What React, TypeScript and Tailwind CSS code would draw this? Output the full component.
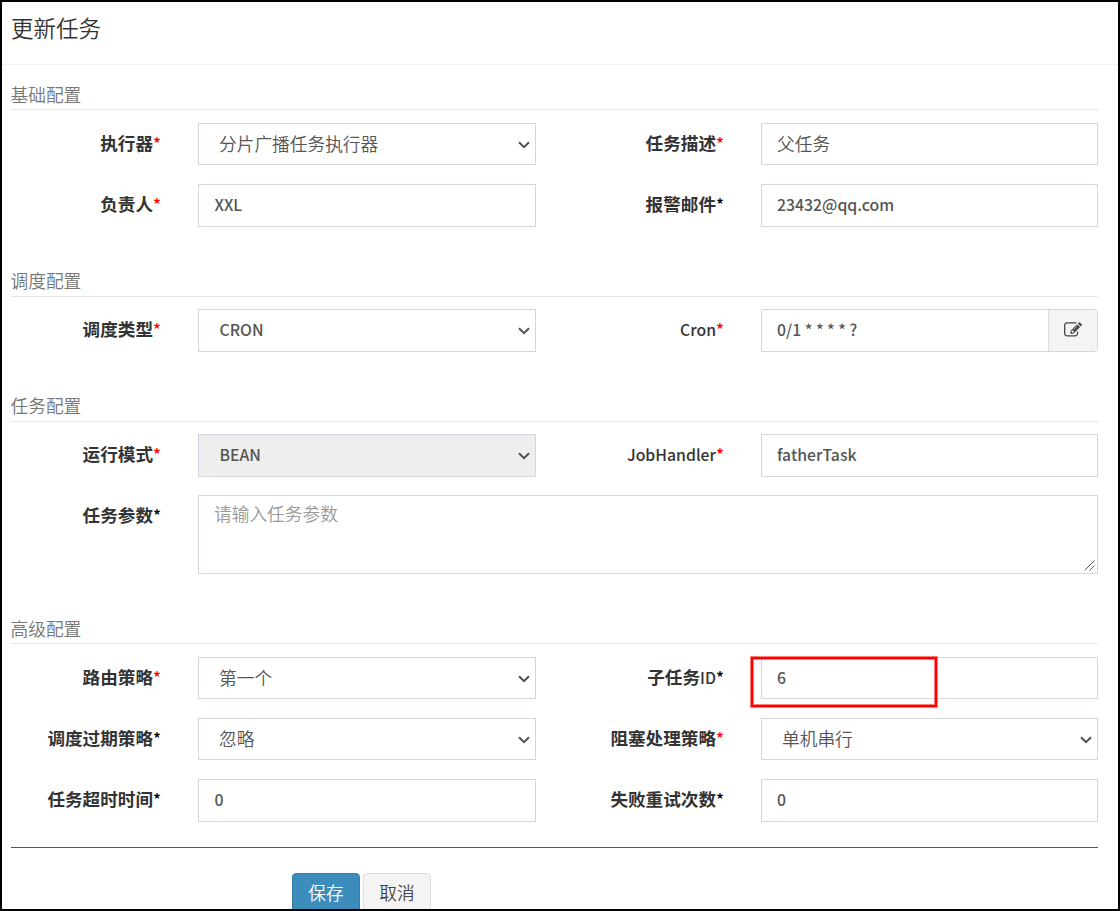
import React from "react";

function Section({ title, className, raised, children }: { title: string; className: string; raised?: boolean; children: React.ReactNode }) {
  return (
    <section className={className}>
      <h2 className={`mr-[20px] ml-[9px] h-[30px] border-b border-[#e5e5e5] text-[17.7px] font-[350] text-[#777] ${raised ? "leading-[26px]" : "leading-[28px]"}`}>
        <span className="-ml-[0.5px]">{title}</span>
      </h2>
      {children}
    </section>
  );
}

function Label({ text, latin = "", red = true, right }: { text?: string; latin?: string; red?: boolean; right?: boolean }) {
  return (
    <label className={`mr-[37px] h-[42px] shrink-0 text-right text-[17.600px] leading-[40px] font-bold whitespace-nowrap text-[#333] ${right ? "w-[188px]" : "w-[159px]"}`}>
      {text}
      {latin && <span className="text-[15.800px] font-medium">{latin}</span>}
      <span className={red ? "text-[16.5px] font-medium text-[#f00]" : "text-[16.5px] font-medium text-black"}>*</span>
    </label>
  );
}

interface BoxProps {
  value: string;
  select?: boolean;
  disabled?: boolean;
  chinese?: boolean;
  addon?: boolean;
  right?: boolean;
  short?: boolean;
}

function Box({ value, select, disabled, chinese, addon, right, short }: BoxProps) {
  return (
    <div
      className={`flex shrink-0 items-center border border-[#d2d6de] text-[#555] ${short ? "h-[42px]" : "h-[43px]"} ${right ? "w-[337px]" : "w-[338px]"} ${disabled ? "bg-[#eee]" : "bg-white"} ${select ? (chinese ? "pl-[20px]" : "pl-[20.500px]") : right ? "pl-[15px]" : "pl-[15.500px]"} ${addon ? "rounded-r-[4px]" : ""}`}
    >
      <span className={chinese ? "pb-[2px] text-[17.7px] leading-[38px] font-[350]" : short ? "text-[15.800px] leading-[40px] font-medium" : "pb-[2px] text-[15.800px] leading-[38px] font-medium"}>{value}</span>
      {select && (
        <svg className={`mr-[5px] ml-auto ${short ? "mt-[2px]" : "mt-px"}`} width="12" height="8" viewBox="0 0 12 8" fill="none" stroke="#505050" strokeWidth="2">
          <path d="M1 1.200l5 5 5-5" />
        </svg>
      )}
      {addon && (
        <button className="ml-auto flex h-[41px] w-[49px] items-center justify-center rounded-r-[3px] border-l border-[#ddd] bg-[#f4f4f4]">
          <svg className="-mt-px" width="18" height="18" viewBox="0 0 1792 1792" fill="#444">
            <path d="M888 1184l116-116-152-152-116 116v56h96v96h56zm440-720q-16-16-33 1l-350 350q-17 17-1 33t33-1l350-350q17-17 1-33zm80 594v190q0 119-84.500 203.500t-203.500 84.500h-832q-119 0-203.500-84.500t-84.500-203.500v-832q0-119 84.500-203.500t203.500-84.500h832q63 0 117 25 15 7 18 23 3 17-9 29l-49 49q-14 14-32 8-23-6-45-6h-832q-66 0-113 47t-47 113v832q0 66 47 113t113 47h832q66 0 113-47t47-113v-126q0-13 9-22l64-64q15-15 35-7t20 29zm-96-738l288 288-672 672h-288v-288zm444 132l-92 92-288-288 92-92q28-28 68-28t68 28l152 152q28 28 28 68t-28 68z" />
          </svg>
        </button>
      )}
    </div>
  );
}

function Row({ className, children }: { className: string; children: React.ReactNode }) {
  return <div className={`relative flex ${className}`}>{children}</div>;
}

export default function App() {
  return (
    <div className="h-[911px] w-[1120px] overflow-hidden border-2 border-black bg-white font-['Noto_Sans_CJK_SC',sans-serif]">
      <h1 className="h-[63px] border-b border-[#f4f4f4] pl-[9px] text-[22.5px] leading-[51px] font-[350] text-[#333]">更新任务</h1>

      <Section title="基础配置" className="mt-[15px]">
        <Row className="mt-[13px]">
          <Label text="执行器" />
          <Box value="分片广播任务执行器" select chinese short />
          <Label text="任务描述" right />
          <Box value="父任务" chinese right short />
        </Row>
        <Row className="mt-[19px]">
          <Label text="负责人" />
          <Box value="XXL" />
          <Label text="报警邮件" red={false} right />
          <Box value="23432@qq.com" right />
        </Row>
      </Section>

      <Section title="调度配置" className="mt-[40px]" raised>
        <Row className="mt-[12px]">
          <Label text="调度类型" />
          <Box value="CRON" select />
          <Label latin="Cron" right />
          <Box value="0/1 * * * * ?" addon right />
        </Row>
      </Section>

      <Section title="任务配置" className="mt-[40px]" raised>
        <Row className="mt-[12px]">
          <Label text="运行模式" />
          <Box value="BEAN" select disabled />
          <Label latin="JobHandler" right />
          <Box value="fatherTask" right />
        </Row>
        <Row className="mt-[18px]">
          <Label text="任务参数" red={false} />
          <div className="flex h-[79px] w-[900px] justify-between border border-[#d2d6de] pl-[15px] text-[17.7px] leading-[34px] font-[350] text-[#999]">
            请输入任务参数
            <svg className="mr-[2px] mb-[2px] self-end" width="11" height="11" viewBox="0 0 11 11" stroke="#555" strokeWidth="1">
              <path d="M0.500 10.500l10-10M5.500 10.500l5-5" />
            </svg>
          </div>
        </Row>
      </Section>

      <Section title="高级配置" className="mt-[40px]">
        <Row className="mt-[13px]">
          <Label text="路由策略" />
          <Box value="第一个" select chinese short />
          <Label text="子任务" latin="ID" red={false} right />
          <Box value="6" right short />
          <div className="absolute top-0 left-[749px] h-[50px] w-[186px] border-2 border-[#f00] shadow-[0_0_0_1px_#ff000080,inset_0_0_0_1px_#ff000080]" />
        </Row>
        <Row className="mt-[19px]">
          <Label text="调度过期策略" red={false} />
          <Box value="忽略" select chinese short />
          <Label text="阻塞处理策略" right />
          <Box value="单机串行" select chinese right short />
        </Row>
        <Row className="mt-[19px]">
          <Label text="任务超时时间" red={false} />
          <Box value="0" />
          <Label text="失败重试次数" red={false} right />
          <Box value="0" right />
        </Row>
      </Section>

      <hr className="mt-[25px] mr-[20px] ml-[9px] border-t border-[#555]" />
      <div className="mt-[25px] flex gap-[3px] pl-[290px] text-[17.7px] leading-[37px] font-[350]">
        <button className="h-[43px] w-[68px] rounded-[4px] border border-[#367fa9] bg-[#3c8dbc] pb-[4px] text-white">保存</button>
        <button className="h-[43px] w-[68px] rounded-[4px] border border-[#ddd] bg-[#f4f4f4] pb-[4px] text-[#444]">取消</button>
      </div>
    </div>
  );
}
